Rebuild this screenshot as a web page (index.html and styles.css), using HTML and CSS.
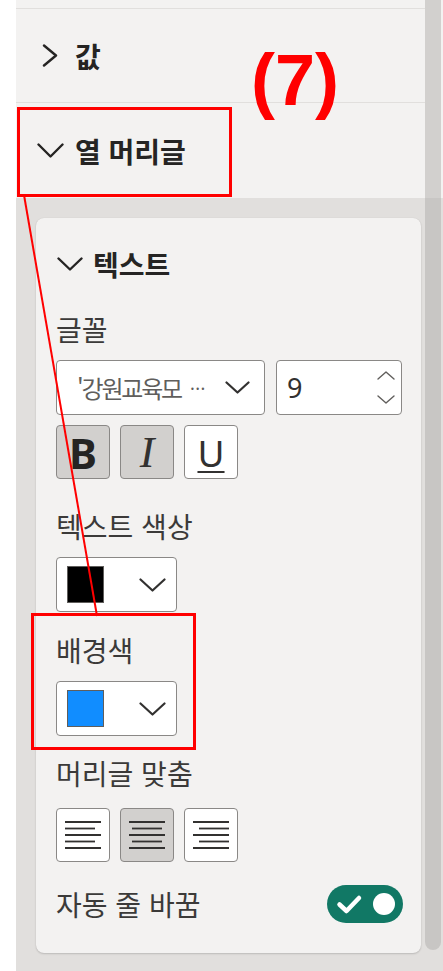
FILE: index.html
```html
<!DOCTYPE html>
<html lang="ko">
<head>
<meta charset="utf-8">
<title>열 머리글</title>
<link rel="stylesheet" href="styles.css">
</head>
<body>
<div class="page">
  <div class="gutter"></div>
  <div class="panel">
    <div class="row-top"></div>
    <div class="section sec-value">
      <span class="chev"><svg width="16" height="23" viewBox="0 0 16 23"><polyline points="2,1.5 14,11.5 2,21.5" fill="none" stroke="#252423" stroke-width="2.4" stroke-linecap="round" stroke-linejoin="round"/></svg></span>
      <span class="sec-title">값</span>
    </div>
    <div class="section sec-header">
      <span class="chev"><svg width="27" height="15" viewBox="0 0 27 15"><polyline points="1.5,1.5 13.5,13.5 25.5,1.5" fill="none" stroke="#252423" stroke-width="2.4" stroke-linecap="round" stroke-linejoin="round"/></svg></span>
      <span class="sec-title">열 머리글</span>
    </div>
    <div class="group">
      <div class="card">
        <div class="card-head">
          <span class="chev"><svg width="26" height="14" viewBox="0 0 26 14"><polyline points="1.5,1.5 13,12.5 24.5,1.5" fill="none" stroke="#252423" stroke-width="2.4" stroke-linecap="round" stroke-linejoin="round"/></svg></span>
          <span class="sec-title">텍스트</span>
        </div>
        <div class="label m-font">글꼴</div>
        <div class="font-row">
          <div class="field font-select">
            <span class="font-name">'강원교육모<span class="dots">···</span></span>
            <svg width="25" height="13" viewBox="0 0 25 13"><polyline points="1.5,1.5 12.5,11.5 23.5,1.5" fill="none" stroke="#323130" stroke-width="2.2" stroke-linecap="round" stroke-linejoin="round"/></svg>
          </div>
          <div class="field size-box">
            <span class="size-val">9</span>
            <span class="spin">
              <svg width="18" height="9" viewBox="0 0 18 9"><polyline points="1,8 9,1 17,8" fill="none" stroke="#605e5c" stroke-width="1.4" stroke-linecap="round" stroke-linejoin="round"/></svg>
              <svg width="18" height="9" viewBox="0 0 18 9"><polyline points="1,1 9,8 17,1" fill="none" stroke="#605e5c" stroke-width="1.4" stroke-linecap="round" stroke-linejoin="round"/></svg>
            </span>
          </div>
        </div>
        <div class="btn-row m-biu">
          <span class="tbtn on b-bold">B</span>
          <span class="tbtn on b-ital">I</span>
          <span class="tbtn b-under">U</span>
        </div>
        <div class="label m-tcolor">텍스트 색상</div>
        <div class="field color-select m-dd">
          <span class="swatch sw-black"></span>
          <svg width="27" height="14" viewBox="0 0 27 14"><polyline points="1.5,1.5 13.5,12.5 25.5,1.5" fill="none" stroke="#323130" stroke-width="2.2" stroke-linecap="round" stroke-linejoin="round"/></svg>
        </div>
        <div class="label m-bg">배경색</div>
        <div class="field color-select m-dd">
          <span class="swatch sw-blue"></span>
          <svg width="27" height="14" viewBox="0 0 27 14"><polyline points="1.5,1.5 13.5,12.5 25.5,1.5" fill="none" stroke="#323130" stroke-width="2.2" stroke-linecap="round" stroke-linejoin="round"/></svg>
        </div>
        <div class="label m-align">머리글 맞춤</div>
        <div class="btn-row m-alignrow">
          <span class="tbtn">
            <svg width="38" height="30" viewBox="0 0 38 30"><g stroke="#323130" stroke-width="1.8"><line x1="1" y1="2" x2="37" y2="2"/><line x1="1" y1="8.5" x2="31" y2="8.5"/><line x1="1" y1="15" x2="37" y2="15"/><line x1="1" y1="21.5" x2="31" y2="21.5"/><line x1="1" y1="28" x2="37" y2="28"/></g></svg>
          </span>
          <span class="tbtn on">
            <svg width="38" height="30" viewBox="0 0 38 30"><g stroke="#323130" stroke-width="1.8"><line x1="1" y1="2" x2="37" y2="2"/><line x1="4" y1="8.5" x2="34" y2="8.5"/><line x1="1" y1="15" x2="37" y2="15"/><line x1="4" y1="21.5" x2="34" y2="21.5"/><line x1="1" y1="28" x2="37" y2="28"/></g></svg>
          </span>
          <span class="tbtn">
            <svg width="38" height="30" viewBox="0 0 38 30"><g stroke="#323130" stroke-width="1.8"><line x1="1" y1="2" x2="37" y2="2"/><line x1="7" y1="8.5" x2="37" y2="8.5"/><line x1="1" y1="15" x2="37" y2="15"/><line x1="7" y1="21.5" x2="37" y2="21.5"/><line x1="1" y1="28" x2="37" y2="28"/></g></svg>
          </span>
        </div>
        <div class="wrap-row">
          <span class="label">자동 줄 바꿈</span>
          <span class="toggle">
            <svg width="76" height="38" viewBox="0 0 76 38"><polyline points="12.5,19.5 19.5,26 32,13" fill="none" stroke="#ffffff" stroke-width="4.5" stroke-linecap="round" stroke-linejoin="round"/><circle cx="57" cy="19" r="11" fill="#ffffff"/></svg>
          </span>
        </div>
      </div>
    </div>
  </div>
  <div class="scrollbar"><div class="thumb"></div></div>
</div>

<div class="annot-label">(7)</div>
<div class="annot-box box-one"></div>
<div class="annot-box box-two"></div>
<svg class="annot-line" width="443" height="971" viewBox="0 0 443 971"><line x1="24" y1="195" x2="97" y2="616" stroke="#ff0000" stroke-width="2"/></svg>
</body>
</html>
```

FILE: styles.css
```css
html, body {
  margin: 0;
  padding: 0;
  background: #ffffff;
}

body {
  font-family: "Noto Sans CJK KR", "Noto Sans", sans-serif;
  color: #323130;
  width: 443px;
  height: 971px;
  overflow: hidden;
  position: relative;
}

.page {
  display: flex;
  height: 971px;
}

.gutter {
  width: 16px;
  flex: none;
  background: #ffffff;
}

.panel {
  flex: 1;
  display: flex;
  flex-direction: column;
  background: #f3f2f1;
  min-width: 0;
}

.row-top {
  height: 8px;
  border-bottom: 1px solid #e1dfdd;
  flex: none;
}

.section {
  display: flex;
  align-items: center;
  gap: 11px;
  padding-left: 20px;
  flex: none;
}

.sec-value {
  height: 93px;
  border-bottom: 1px solid #e1dfdd;
}

.sec-header {
  height: 95px;
}

.chev {
  width: 28px;
  display: flex;
  justify-content: center;
  align-items: center;
  flex: none;
}

.sec-title {
  font-size: 28px;
  font-weight: 700;
  color: #252423;
  line-height: 36px;
}

.group {
  flex: 1;
  background: #e1dfdd;
  padding: 20px 4px 0 20px;
}

.card {
  background: #f3f2f1;
  border-radius: 8px;
  box-shadow: 0 1px 2px rgba(0, 0, 0, 0.16), 0 0 1px rgba(0, 0, 0, 0.1);
  padding: 28px 19px 30px 20px;
  display: flex;
  flex-direction: column;
}

.card-head {
  display: flex;
  align-items: center;
  gap: 10px;
  height: 36px;
}

.card-head .chev {
  width: 27px;
}

.label {
  font-size: 28px;
  line-height: 36px;
  height: 36px;
  color: #3b3a39;
  white-space: nowrap;
}

.m-font { margin-top: 29px; }
.m-tcolor { margin-top: 29px; }
.m-bg { margin-top: 20px; }
.m-align { margin-top: 19px; }
.m-dd { margin-top: 13px; }

.font-row {
  display: flex;
  gap: 11px;
  margin-top: 13px;
  height: 55px;
}

.field {
  box-sizing: border-box;
  background: #ffffff;
  border: 1px solid #8a8886;
  border-radius: 4px;
  display: flex;
  align-items: center;
}

.font-select {
  width: 209px;
  flex: none;
  padding: 0 14px 0 20px;
  justify-content: space-between;
}

.font-name {
  font-size: 24px;
  letter-spacing: -2.2px;
  color: #605e5c;
  white-space: nowrap;
}

.dots {
  font-family: "Noto Sans", sans-serif;
  font-size: 18px;
  letter-spacing: 0.5px;
  margin-left: 9px;
  vertical-align: 3px;
}

.size-box {
  flex: 1;
  padding: 0 6px 0 10px;
  justify-content: space-between;
}

.size-val {
  font-family: "Noto Sans", sans-serif;
  font-size: 27px;
  color: #323130;
}

.spin {
  display: flex;
  flex-direction: column;
  gap: 15px;
}

.spin svg {
  display: block;
}

.btn-row {
  display: flex;
  gap: 10px;
  height: 54px;
}

.m-biu { margin-top: 10px; }
.m-alignrow { margin-top: 17px; }

.tbtn {
  box-sizing: border-box;
  width: 54px;
  height: 54px;
  background: #ffffff;
  border: 1px solid #8a8886;
  border-radius: 4px;
  display: flex;
  align-items: center;
  justify-content: center;
  color: #252423;
}

.tbtn.on {
  background: #d2d0ce;
}

.b-bold {
  font-family: "Noto Sans", sans-serif;
  font-weight: 700;
  font-size: 42px;
}

.b-ital {
  font-family: "Liberation Serif", serif;
  font-style: italic;
  font-size: 44px;
  color: #323130;
}

.b-under {
  font-family: "Noto Sans", sans-serif;
  font-size: 37px;
  color: #323130;
  text-decoration: underline;
  text-decoration-thickness: 2px;
  text-underline-offset: 4px;
}

.color-select {
  width: 121px;
  height: 55px;
  padding: 0 10px 0 10px;
  justify-content: space-between;
}

.swatch {
  width: 37px;
  height: 37px;
  box-sizing: border-box;
  border: 1px solid #605e5c;
}

.sw-black { background: #000000; }
.sw-blue { background: #118dff; }

.wrap-row {
  margin-top: 23px;
  height: 38px;
  display: flex;
  align-items: center;
  justify-content: space-between;
}

.toggle {
  width: 76px;
  height: 38px;
  border-radius: 19px;
  background: #117865;
  display: block;
  margin-right: -1px;
}

.toggle svg {
  display: block;
}

.scrollbar {
  width: 18px;
  flex: none;
  background: linear-gradient(to bottom, #f3f2f1 0, #f3f2f1 198px, #e1dfdd 198px);
  display: flex;
  flex-direction: column;
}

.thumb {
  width: 16px;
  height: 950px;
  border-radius: 0 0 8px 8px;
  background: linear-gradient(to bottom, #d2d0ce 0, #d2d0ce 198px, #c8c6c4 198px);
}

.annot-label {
  position: absolute;
  left: 251px;
  top: 44px;
  font-family: "Liberation Sans", sans-serif;
  font-weight: 700;
  font-size: 72px;
  line-height: 72px;
  color: #ff0000;
}

.annot-box {
  position: absolute;
  border: 3px solid #ff0000;
  box-sizing: border-box;
}

.box-one {
  left: 17px;
  top: 107px;
  width: 215px;
  height: 90px;
}

.box-two {
  left: 31px;
  top: 613px;
  width: 165px;
  height: 137px;
}

.annot-line {
  position: absolute;
  left: 0;
  top: 0;
  pointer-events: none;
}
```
